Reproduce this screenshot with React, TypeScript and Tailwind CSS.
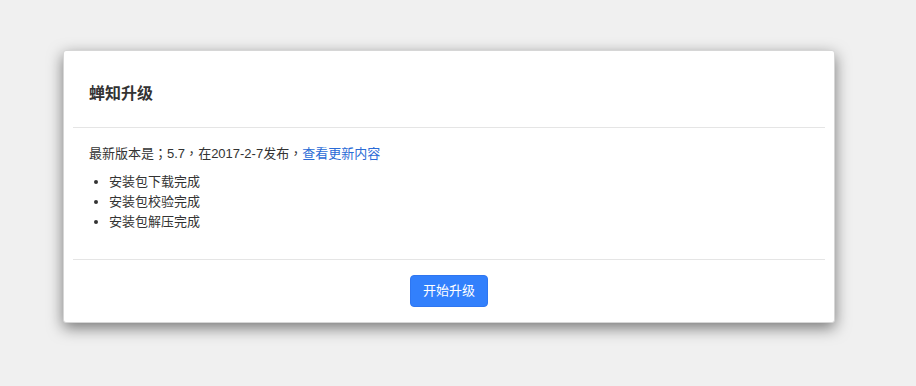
export default function App() {
  const steps = ['安装包下载完成', '安装包校验完成', '安装包解压完成'];
  const punct = 'font-["Noto_Sans_CJK_TC",sans-serif]';

  return (
    <div
      className="min-h-[386px] w-[916px] bg-[#f0f0f0] pt-[50px]"
      style={{ fontFamily: '"Liberation Sans", "Noto Sans CJK SC", sans-serif' }}
    >
      <div className="ml-[63px] w-[772px] rounded-[3px] border border-[#d6d6d6] bg-white shadow-[0_5px_15px_rgba(0,0,0,0.5)]">
        <div className="px-[25px] pt-[31px] pb-[21px]">
          <h1 className="text-[16px] font-bold leading-[24px] text-[#333]">蝉知升级</h1>
        </div>
        <div className="mx-[9px] border-t border-[#e5e5e5]" />
        <div className="px-[25px] pt-[15px] pb-[27px] text-[13px] leading-[20px] text-[#333]">
          <p>
            最新版本是<span className={punct}>；</span>5.7<span className={punct}>，</span>在2017-2-7发布
            <span className={punct}>，</span>
            <a className="text-[#2a6bd6]" href="#">查看更新内容</a>
          </p>
          <ul className="mt-[8px] list-disc pl-[20px]">
            {steps.map((s) => (
              <li key={s}>{s}</li>
            ))}
          </ul>
        </div>
        <div className="mx-[9px] border-t border-[#e5e5e5]" />
        <div className="flex justify-center pt-[15px] pb-[15px]">
          <button className="h-[32px] w-[78px] rounded-[4px] border border-[#2f76f0] bg-[#3280fc] text-[13px] text-white">
            开始升级
          </button>
        </div>
      </div>
    </div>
  );
}
